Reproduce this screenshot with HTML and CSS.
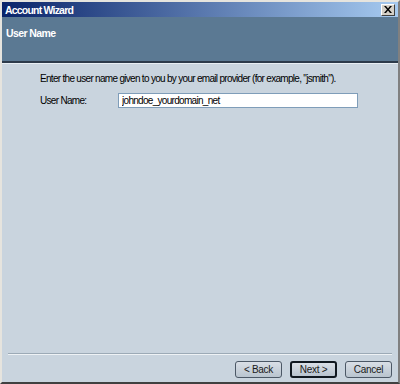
FILE: index.html
```html
<!DOCTYPE html>
<html lang="en">
<head>
    <meta charset="UTF-8">
    <title>Account Wizard</title>
    <link rel="stylesheet" href="styles.css">
</head>
<body>
    <div class="window">
        <div class="titlebar">
            <span class="title">Account Wizard</span>
            <span class="close">
                <svg width="8" height="7" viewBox="0 0 8 7"><path d="M0 0h2l2 2.5L6 0h2L5 3.5 8 7H6L4 4.5 2 7H0l3-3.5z" fill="#000"/></svg>
            </span>
        </div>
        <div class="header">User Name</div>
        <div class="content">
            <p class="intro">Enter the user name given to you by your email provider (for example, "jsmith").</p>
            <div class="field">
                <label>User Name:</label>
                <input type="text" value="johndoe_yourdomain_net">
            </div>
        </div>
        <div class="footer">
            <button class="btn">&lt; Back</button>
            <button class="btn default">Next &gt;</button>
            <button class="btn cancel">Cancel</button>
        </div>
    </div>
</body>
</html>
```
FILE: styles.css
```css
body {
    margin: 0;
    font-family: 'Liberation Sans', Arial, sans-serif;
    font-size: 10px;
    letter-spacing: -0.7px;
    background: #d4d0c8;
}
.window {
    width: 400px;
    height: 384px;
    box-sizing: border-box;
    border: 2px solid #e6e4de;
    border-right-color: #808080;
    border-bottom-color: #404040;
    background: #c9d4de;
    display: flex;
    flex-direction: column;
}
.titlebar {
    height: 15px;
    display: flex;
    align-items: center;
    justify-content: space-between;
    padding: 0 3px 0 3px;
    background: linear-gradient(to right, #0a246a, #a6caf0);
    color: white;
    font-weight: bold;
    font-size: 10.5px;
    letter-spacing: -0.8px;
}
.close {
    width: 14px;
    height: 12px;
    box-sizing: border-box;
    background: #d4d0c8;
    border: 1px solid #fff;
    border-right-color: #404040;
    border-bottom-color: #404040;
    display: flex;
    align-items: center;
    justify-content: center;
}
.header {
    height: 46px;
    background: #5b7993;
    border-bottom: 2px solid #2c3a4a;
    color: white;
    font-weight: bold;
    font-size: 10.5px;
    letter-spacing: -0.6px;
    padding: 10px 4px 0;
    box-sizing: border-box;
}
.content {
    flex: 1;
    padding: 9px 0 0 38px;
    border-top: 1px solid #e8eef3;
}
.intro {
    margin: 0 0 9px;
    color: #000;
}
.field {
    display: flex;
    align-items: center;
}
.field label {
    width: 78px;
}
.field input {
    width: 240px;
    height: 15px;
    box-sizing: border-box;
    border: 1px solid #7f9db9;
    padding: 0 3px;
    font: inherit;
    letter-spacing: inherit;
    background: white;
    color: #000;
}
.footer {
    margin: 0 6px;
    border-top: 1px solid #9caab6;
    box-shadow: inset 0 1px 0 #eef2f5;
    padding: 7px 0 4px;
    display: flex;
    justify-content: flex-end;
    gap: 8px;
}
.btn {
    width: 47px;
    height: 17px;
    box-sizing: border-box;
    font: inherit;
    letter-spacing: -0.3px;
    padding: 0;
    background: linear-gradient(#d9dfe6, #b9c4cf);
    border: 1px solid #4c5866;
    border-radius: 3px;
    color: #1a1a1a;
}
.btn.default {
    border: 2px solid #101820;
}
```
